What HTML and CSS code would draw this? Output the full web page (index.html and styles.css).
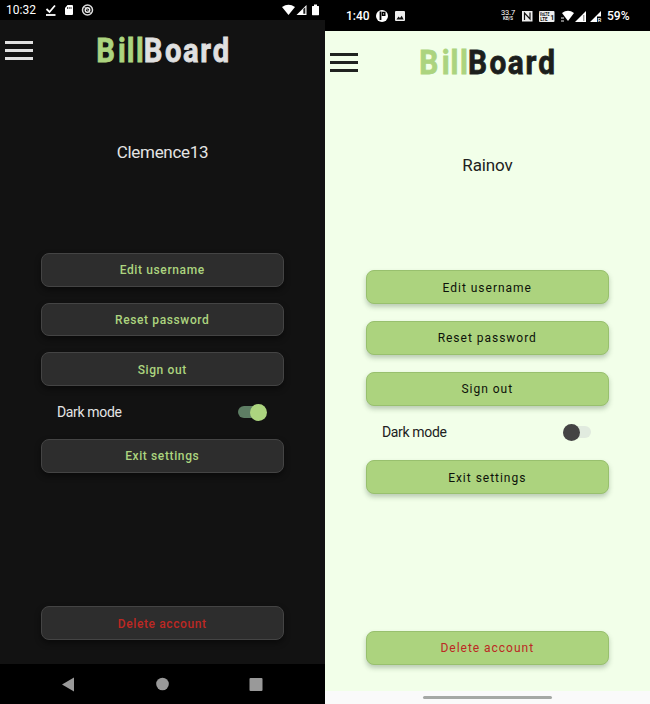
FILE: index.html
```html
<!DOCTYPE html>
<html lang="en">
<head>
<meta charset="utf-8">
<title>BillBoard settings</title>
<link rel="stylesheet" href="styles.css">
</head>
<body>
<main class="screens">
  <section class="phone dark">
    <div class="status">
      <span class="time">10:32</span>
      <svg class="st-left" width="50" height="14" viewBox="0 0 50 14">
        <path d="M2.500 6l3 3 5.500-6.500" fill="none" stroke="#fff" stroke-width="1.800"/><path d="M2 12h9.500" stroke="#fff" stroke-width="1.800"/>
        <path d="M23.500 2h4.500q1 0 1 1v8q0 1-1 1h-6q-1 0-1-1V5z" fill="#fff"/><path d="M23.500 4v2M25.200 4v2M27 4v2" stroke="#000" stroke-width=".7"/>
        <circle cx="43.500" cy="7" r="5" fill="none" stroke="#ddd" stroke-width="1.500"/><circle cx="43.500" cy="7" r="2.300" fill="none" stroke="#eee" stroke-width="1.400"/><path d="M40 3.500l7 7" stroke="#ddd" stroke-width="1"/>
      </svg>
      <svg class="st-right" width="40" height="14" viewBox="0 0 40 14">
        <path d="M0 4Q6.500-.5 13 4L6.500 12z" fill="#fff"/>
        <path d="M14.500 12L24.500 2v10z" fill="#fff"/><path d="M21.300 6v4.800h2V4.200z" fill="#222"/>
        <path d="M30.500 3H32V1.500h3V3h1.500q.5 0 .5.500v8q0 .8-.5.800h-6q-.5 0-.5-.8v-8q0-.5.500-.5z" fill="#fff"/>
      </svg>
    </div>
    <header class="top">
      <div class="menu"><i></i><i></i><i></i></div>
      <svg class="logo" width="150" height="50" viewBox="-8 -8 150 50">
        <g transform="scale(.86 1)">
          <text class="bill" x="-1 24.500 34.500 45.500" y="28.500">Bill</text>
          <text class="board" x="54.500 79 100 120 134.500" y="28.500">Board</text>
        </g>
      </svg>
    </header>
    <h1 class="user">Clemence13</h1>
    <div class="actions">
      <button>Edit username</button>
      <button>Reset password</button>
      <button>Sign out</button>
      <div class="mode"><span>Dark mode</span><span class="switch on"></span></div>
      <button>Exit settings</button>
      <button class="delete">Delete account</button>
    </div>
    <nav class="nav">
      <svg width="325" height="40" viewBox="0 0 325 40" fill="#999">
        <path d="M62 20.500L74 13.500v14z"/><circle cx="162.500" cy="20" r="6.300"/><rect x="249.500" y="14" width="13" height="13" rx="1"/>
      </svg>
    </nav>
  </section>
  <section class="phone light">
    <div class="status">
      <span class="time">1:40</span>
      <svg class="st-left" width="32" height="14" viewBox="0 0 32 14">
        <circle cx="7" cy="7" r="6" fill="#fff"/><path d="M5.500 2.500v8.500" stroke="#000" stroke-width="1.800"/><path d="M7.500 3.500h2.300v2.800H7.500z" fill="none" stroke="#000" stroke-width="1.400"/>
        <rect x="20" y="2" width="10" height="10" rx="1" fill="#eee"/><path d="M21.500 10.500l2-3 1.500 1.600 1.700-2.300 2 3.700z" fill="#111"/>
      </svg>
      <span class="speed"><b>33.7</b><small>KB/S</small></span>
      <svg class="st-right" width="82" height="14" viewBox="0 0 82 14">
        <rect x="0" y="2" width="10.500" height="10.500" fill="#eee"/><path d="M2.500 11V4l5.500 6V3.500" fill="none" stroke="#111" stroke-width="1.200"/>
        <rect x="17" y="2" width="15.500" height="11" rx="1" fill="#eee"/>
        <text class="lte" x="17.800" y="6.800" textLength="9.500" lengthAdjust="spacingAndGlyphs">VoLTE</text><text class="lte" x="18.300" y="12.300">LTE</text><text class="one" x="28.300" y="10.500">1</text>
        <path d="M40 4Q46-.5 52 4L46 12z" fill="#fff"/><path d="M39 9h3M39 12h3" stroke="#eee" stroke-width="1.200"/>
        <path d="M53 13L64 2v11z" fill="#fff"/><path d="M61.800 6v6" stroke="#777" stroke-width="1"/>
        <path d="M68 13L79 2v5.500h-4V13z" fill="#fff"/><text class="roam" x="75.600" y="13">R</text>
      </svg>
      <span class="battery">59%</span>
    </div>
    <header class="top">
      <div class="menu"><i></i><i></i><i></i></div>
      <svg class="logo" width="153" height="50" viewBox="-8 -8 150 50" preserveAspectRatio="none">
        <g transform="scale(.86 1)">
          <text class="bill" x="-1 24.500 34.500 45.500" y="28.500">Bill</text>
          <text class="board" x="54.500 79 100 120 134.500" y="28.500">Board</text>
        </g>
      </svg>
    </header>
    <h1 class="user">Rainov</h1>
    <div class="actions">
      <button>Edit username</button>
      <button>Reset password</button>
      <button>Sign out</button>
      <div class="mode"><span>Dark mode</span><span class="switch"></span></div>
      <button>Exit settings</button>
      <button class="delete">Delete account</button>
    </div>
    <div class="home"><i></i></div>
  </section>
</main>
</body>
</html>
```

FILE: styles.css
```css
* { box-sizing: border-box; }
body { margin: 0; font-family: Roboto, sans-serif; }
.screens { display: grid; grid-template-columns: 325px 325px; height: 704px; overflow: hidden; }
.phone { display: flex; flex-direction: column; height: 704px; }
.dark { background: #121212; color: #e4e4e4; }
.light { background: #f2ffe9; color: #212121; }

.status { display: flex; align-items: center; flex: none; background: #000; color: #fff; font-size: 12px; }
.status svg { flex: none; }
.dark .status { height: 20px; padding-left: 6px; }
.dark .time { width: 38px; }
.dark .st-right { margin-left: auto; margin-right: 3px; }
.light .status { height: 31px; padding-left: 21px; font-weight: 500; }
.light .time { width: 29px; }
.speed { display: flex; flex-direction: column; align-items: center; width: 16px; margin-left: 93px; line-height: 1; }
.speed b { height: 8px; font-size: 7.500px; font-weight: 400; letter-spacing: -.2px; }
.speed small { height: 5px; font-size: 4.500px; }
.light .st-right { margin-left: 6px; }
.battery { margin-left: 3px; }
.lte { font-size: 4.500px; font-weight: 700; fill: #111; }
.one { font-size: 7px; font-weight: 700; fill: #111; }
.roam { font-size: 6px; fill: #fff; }

.top { display: flex; flex: none; height: 60px; }
.menu { display: flex; flex-direction: column; gap: 5px; width: 28px; margin: 21px 0 0 5px; }
.menu i { height: 3px; background: #e0e0e0; }
.light .menu { margin-top: 22px; }
.light .menu i { background: #202320; }
.logo { flex: none; margin: 5px 0 0 56px; font: 700 34px Roboto, sans-serif; stroke-width: .8px; }
.light .logo { margin: 6px 0 0 54px; }
.bill { fill: #acd47f; stroke: #acd47f; }
.board { fill: #e0e0e0; stroke: #e0e0e0; }
.light .board { fill: #1c1f1c; stroke: #1c1f1c; }

.user { margin: 61px 0 0; height: 22px; line-height: 22px; font-size: 17px; font-weight: 400; letter-spacing: -.3px; text-align: center; }
.light .user { margin-top: 63px; letter-spacing: -.1px; }

.actions { display: flex; flex-direction: column; flex: 1; width: 243.500px; margin: 90px auto 0 40.500px; }
.light .actions { margin-top: 94px; }
button {
  flex: none; height: 33.500px; margin: 0 0 16.200px; padding: 1px 0 0; border: 1px solid #444; border-radius: 8px;
  background: #2d2d2d; color: #acd47f; font: 500 12px Roboto, sans-serif; letter-spacing: .620px;
  box-shadow: 0 3px 6px rgba(0, 0, 0, .45);
}
.light button {
  height: 34px; margin-bottom: 16.800px; border-color: #98c06e; background: #acd37e; color: #0d120a;
  letter-spacing: .980px; font-weight: 400; box-shadow: 0 3px 5px rgba(40, 70, 40, .28);
}
.mode { display: flex; justify-content: space-between; align-items: center; flex: none; height: 20px; margin: 0 18px 17px 16.500px; font-size: 14px; letter-spacing: -.350px; }
.light .mode { margin-bottom: 18px; }
.switch { position: relative; width: 28px; height: 12px; border-radius: 6px; background: #e1ebdf; }
.switch::after { content: ""; position: absolute; top: -2.500px; left: -.5px; width: 17px; height: 17px; border-radius: 50%; background: #444; }
.switch.on { background: #5e7e64; }
.switch.on::after { left: 11.500px; background: #acd47f; }
.actions .delete { margin-top: 117.500px; color: #bd2823; }
.light .actions .delete { margin-top: 119.800px; color: #bd2823; }

.nav { flex: none; height: 40px; background: #000; }
.nav svg { display: block; }
.home { display: flex; justify-content: center; flex: none; height: 13px; padding-top: 5px; background: #fafafa; }
.home i { width: 129px; height: 3px; border-radius: 2px; background: #a5a8a5; }
```
